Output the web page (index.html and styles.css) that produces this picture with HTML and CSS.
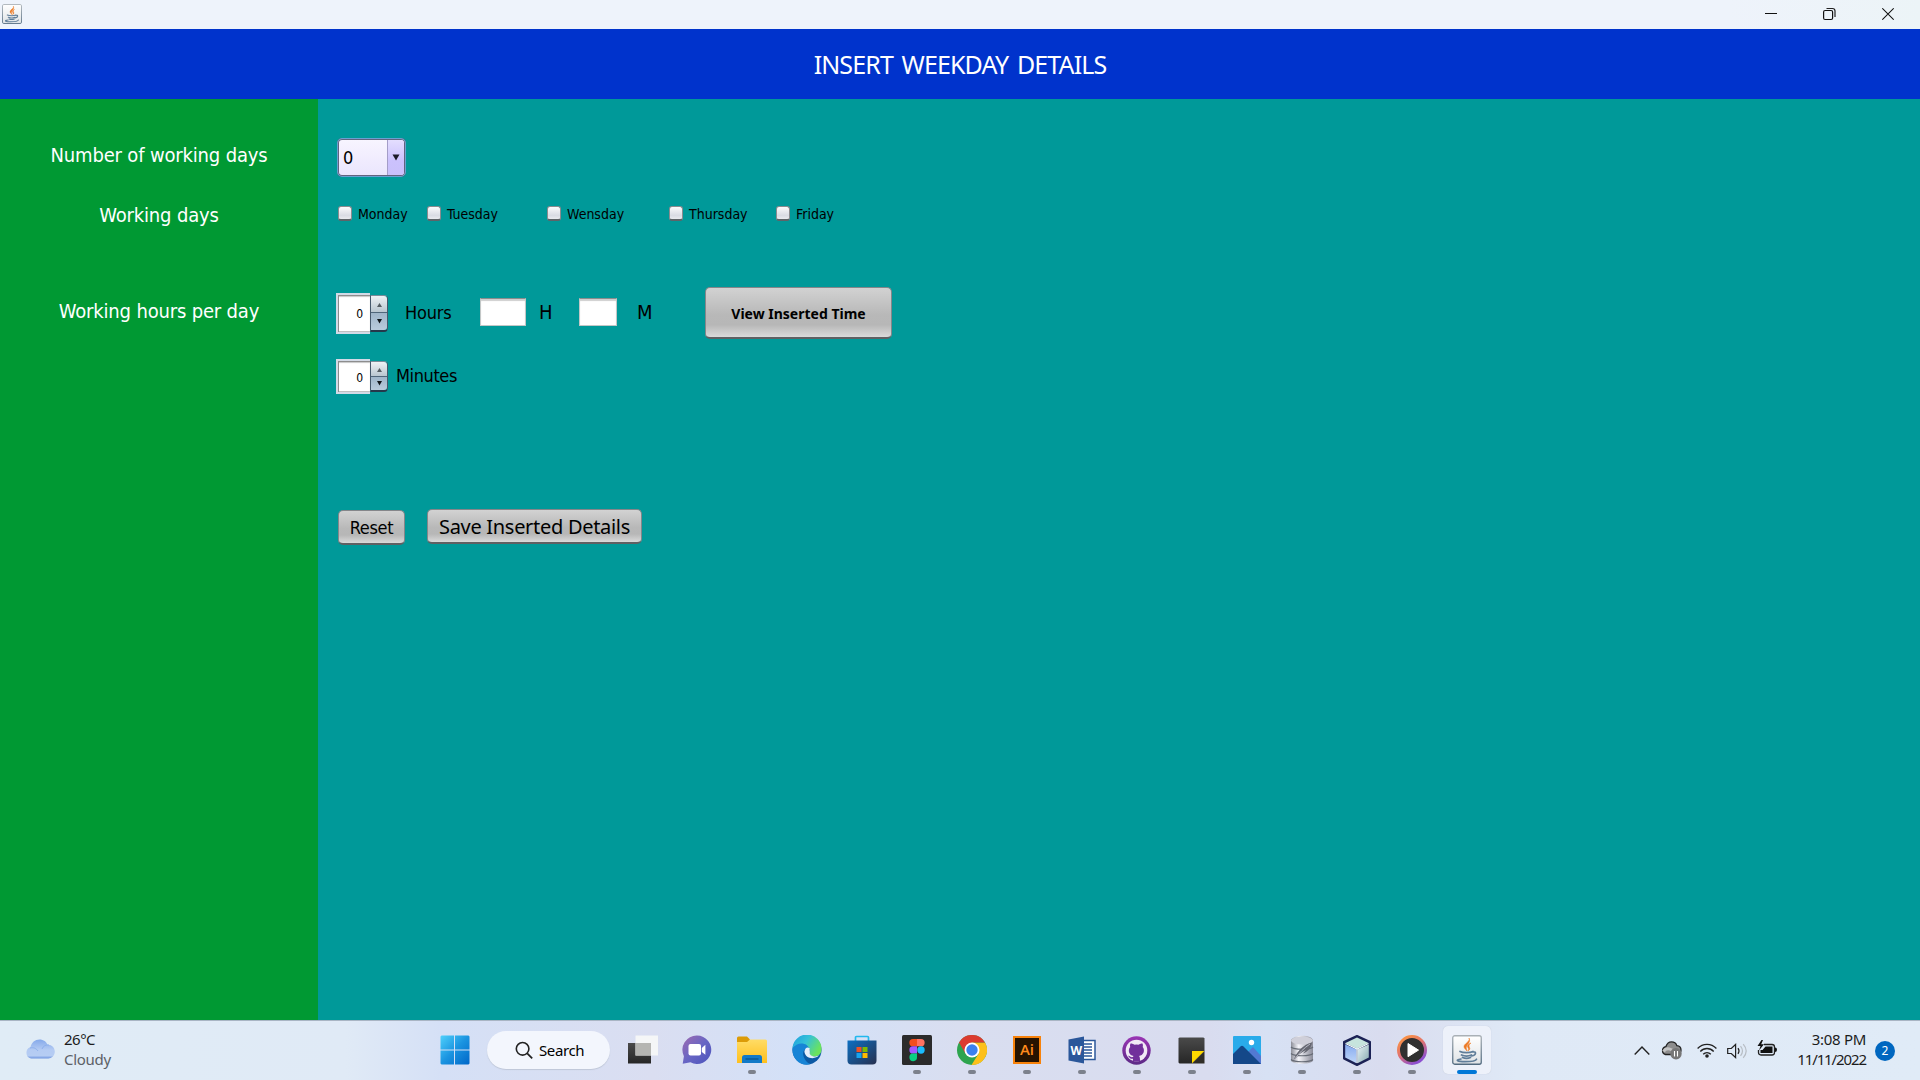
FILE: index.html
```html
<!DOCTYPE html>
<html lang="en">
<head>
<meta charset="utf-8">
<title>Weekday Details</title>
<link rel="stylesheet" href="styles.css">
</head>
<body>
<svg class="defs" width="0" height="0" aria-hidden="true">
  <defs>
    <linearGradient id="tile" x1="0" y1="0" x2="0" y2="1"><stop offset="0" stop-color="#fff"/><stop offset="1" stop-color="#dfe3e6"/></linearGradient>
    <linearGradient id="tileEdge" x1="0" y1="0" x2="0" y2="1"><stop offset="0" stop-color="#a9b0b6"/><stop offset="1" stop-color="#526b80"/></linearGradient>
    <linearGradient id="win" x1="0" y1="0" x2="1" y2="1"><stop offset="0" stop-color="#4fd0fb"/><stop offset=".5" stop-color="#1a93e0"/><stop offset="1" stop-color="#0067c8"/></linearGradient>
    <linearGradient id="cloud" x1="0" y1="0" x2="0" y2="1"><stop offset="0" stop-color="#85a9ea"/><stop offset=".55" stop-color="#b4cbf3"/><stop offset=".85" stop-color="#b6cdf3"/><stop offset="1" stop-color="#6d94df"/></linearGradient>
    <linearGradient id="chat" x1="0" y1="0" x2="1" y2="1"><stop offset="0" stop-color="#a06bb0"/><stop offset=".5" stop-color="#6866c4"/><stop offset="1" stop-color="#4b53bc"/></linearGradient>
    <linearGradient id="folder" x1="0" y1="0" x2="0" y2="1"><stop offset="0" stop-color="#ffdc66"/><stop offset="1" stop-color="#ffbf1c"/></linearGradient>
    <linearGradient id="edgeTop" x1="0" y1="0" x2="1" y2=".5"><stop offset="0" stop-color="#1c9de0"/><stop offset=".5" stop-color="#35c1d8"/><stop offset="1" stop-color="#6be35c"/></linearGradient>
    <linearGradient id="store" x1="0" y1="0" x2="1" y2="1"><stop offset="0" stop-color="#0d6fc2"/><stop offset="1" stop-color="#27304f"/></linearGradient>
    <linearGradient id="dark" x1="0" y1="0" x2="0" y2="1"><stop offset="0" stop-color="#4a4a4a"/><stop offset="1" stop-color="#262626"/></linearGradient>
    <linearGradient id="git" x1="0" y1="0" x2="0" y2="1"><stop offset="0" stop-color="#9a35b4"/><stop offset="1" stop-color="#5c2a86"/></linearGradient>
    <linearGradient id="metal" x1="0" y1="0" x2="1" y2="0"><stop offset="0" stop-color="#8c8e98"/><stop offset=".35" stop-color="#f5f5fa"/><stop offset="1" stop-color="#8a8b98"/></linearGradient>
    <linearGradient id="ring" x1="0" y1="0" x2=".6" y2="1"><stop offset="0" stop-color="#ff9a3c"/><stop offset=".5" stop-color="#e4756a"/><stop offset="1" stop-color="#8d4fd0"/></linearGradient>
    <linearGradient id="cubeL" x1="0" y1="0" x2="0" y2="1"><stop offset="0" stop-color="#86aaf0"/><stop offset="1" stop-color="#bfd6f8"/></linearGradient>
    <linearGradient id="cubeR" x1="0" y1="0" x2="1" y2="1"><stop offset="0" stop-color="#eaf5f6"/><stop offset="1" stop-color="#86a9b0"/></linearGradient>
    <symbol id="java" viewBox="0 0 30 30">
      <rect x=".75" y=".75" width="28.5" height="28.5" rx="2" fill="url(#tile)" stroke="url(#tileEdge)" stroke-width="1.3"/>
      <path d="M17 3c1.500 4-5.500 5.500-5 9 .2 1.500 2 2.500 3 4-.5-2.500-1.200-3-.3-5C15.500 9 19 7 17 3zM19 8c-4 1.500-4 3.500-2.700 5.200.6 1 .2 2-.5 2.800 2.600-1.500 2.200-2.700 1.500-4C16.500 10.500 17.500 9 19 8z" fill="#ec7a25" stroke="#ec7a25" stroke-width=".5"/>
      <path d="M8 16.500c3 1.500 10 1.500 13 0M20.500 17c4-1 4.200 3-.8 4M9.500 20c3 1.300 7 1.300 10 0M10.500 22.500c2.500 1 5.500 1 8 0M9 24c-7 1.200-3 2.500 4 2.600 8 0 11-1 11.500-2.400" fill="none" stroke="#5f7d99" stroke-width="1.700" stroke-linecap="round"/>
    </symbol>
  </defs>
</svg>

<header class="titlebar">
  <svg class="app-icon" width="20" height="20"><use href="#java"/></svg>
  <div class="window-controls">
    <svg width="12" height="14" viewBox="0 0 12 14"><path d="M0 6.500h12" stroke="#111" fill="none"/></svg>
    <svg width="13" height="14" viewBox="0 0 13 14"><path d="M3.500 1.500h6q2.500 0 2.500 2.500v6" stroke="#222" stroke-width="1.200" fill="none"/><rect x=".6" y="3.500" width="9" height="9" rx="1.500" stroke="#111" stroke-width="1.200" fill="none"/></svg>
    <svg width="12" height="14" viewBox="0 0 12 14"><path d="M.3 1.300l11.400 11.400M11.700 1.300L.3 12.700" stroke="#111" stroke-width="1.200" fill="none"/></svg>
  </div>
</header>

<h1 class="banner">INSERT WEEKDAY DETAILS</h1>

<main class="workspace">
  <aside class="sidebar">
    <div class="label label-count">Number of working days</div>
    <div class="label label-days">Working days</div>
    <div class="label label-hours">Working hours per day</div>
  </aside>
  <section class="form">
    <div class="combo">
      <span class="combo-value">0</span>
      <span class="combo-arrow"><svg width="8" height="7" viewBox="0 0 8 7"><path d="M.5.5h7L4 6.500z" fill="#1c1a28"/></svg></span>
    </div>
    <div class="days">
      <div class="day"><span class="box"></span><span>Monday</span></div>
      <div class="day"><span class="box"></span><span>Tuesday</span></div>
      <div class="day"><span class="box"></span><span>Wensday</span></div>
      <div class="day"><span class="box"></span><span>Thursday</span></div>
      <div class="day"><span class="box"></span><span>Friday</span></div>
    </div>
    <div class="row hours">
      <div class="spinner">
        <span class="spin-value">0</span>
        <span class="spin-buttons">
          <span class="spin up"><svg width="5" height="7" viewBox="0 0 5 7"><path d="M0 7h5L2.500 3z" fill="#555d63"/></svg></span>
          <span class="spin down"><svg width="5" height="5" viewBox="0 0 5 5"><path d="M0 0h5L2.500 4.500z" fill="#101418"/></svg></span>
        </span>
      </div>
      <span class="unit unit-hours">Hours</span>
      <span class="field field-h"></span>
      <span class="unit unit-h">H</span>
      <span class="field field-m"></span>
      <span class="unit unit-m">M</span>
      <div class="button view">View Inserted Time</div>
    </div>
    <div class="row minutes">
      <div class="spinner short">
        <span class="spin-value">0</span>
        <span class="spin-buttons">
          <span class="spin up"><svg width="5" height="7" viewBox="0 0 5 7"><path d="M0 7h5L2.500 3z" fill="#555d63"/></svg></span>
          <span class="spin down"><svg width="5" height="5" viewBox="0 0 5 5"><path d="M0 0h5L2.500 4.500z" fill="#101418"/></svg></span>
        </span>
      </div>
      <span class="unit unit-minutes">Minutes</span>
    </div>
    <div class="row actions">
      <div class="button reset">Reset</div>
      <div class="button save">Save Inserted Details</div>
    </div>
  </section>
</main>

<footer class="taskbar">
  <div class="weather">
    <svg width="30" height="20" viewBox="0 0 30 20"><path d="M6 19.500a6 6 0 0 1-.5-11.500C6.500 3.500 10 .5 14.500.5c4 0 7 2.300 8 5.200 4.200-.3 7.300 3 7.300 6.800 0 4-3 7-6.500 7z" fill="url(#cloud)"/><path d="M5 9c4-1 6 .5 8 3M17 10c1-3 4-4.500 7-4" stroke="#8eb0ec" fill="none"/></svg>
    <div class="weather-text"><span class="temp">26°C</span><span class="sky">Cloudy</span></div>
  </div>
  <div class="apps">
    <div class="app start"><svg width="30" height="30" viewBox="0 0 30 30"><path d="M1.500.5H14v14H.5v-13zM15 .5h13.500l1 1v13H15zM.5 15.500H14v14H1.500l-1-1zM15 15.500h14.500v13l-1 1H15z" fill="url(#win)"/></svg></div>
    <div class="search"><svg width="19" height="19" viewBox="0 0 19 19"><circle cx="7.600" cy="7.800" r="6.300" fill="none" stroke="#222" stroke-width="1.600"/><path d="M12.200 12.300l5 5" stroke="#222" stroke-width="1.800"/></svg><span>Search</span></div>
    <div class="app"><svg width="30" height="30" viewBox="0 0 30 30"><path d="M0 8h23v20.500H0z" fill="url(#dark)"/><path d="M7.500.5H30v20H7.500z" fill="#f7f7f7" opacity=".95"/><path d="M7.500 8H23v12.500H7.500z" fill="#b5b5b2"/></svg></div>
    <div class="app"><svg width="30" height="30" viewBox="0 0 30 30"><path d="M15 .5A14.200 14.200 0 1 1 8.500 27.300L.7 28.700l1.200-7.500A14.300 14.300 0 0 1 15 .5z" fill="url(#chat)"/><rect x="6.500" y="9" width="12.500" height="11.500" rx="2" fill="#fff"/><path d="M19.800 13l3.600-3.200v10L19.800 17z" fill="#fff"/></svg></div>
    <div class="app running"><svg width="30" height="30" viewBox="0 0 30 30"><path d="M0 3q0-1.500 1.500-1.500h8.500l3 3V9H0z" fill="#dc9b07"/><path d="M0 7h10l3-2.500h15.500q1.500 0 1.500 1.500v22H0z" fill="url(#folder)"/><path d="M5 28v-5.500q0-2.500 2.500-2.500h15q2.500 0 2.500 2.500V28z" fill="#1279c7"/><path d="M8.500 24h13" stroke="#07528f" stroke-width="1.300"/></svg></div>
    <div class="app"><svg width="30" height="30" viewBox="0 0 31 31"><circle cx="15.500" cy="15.500" r="15" fill="#0c59a4"/><path d="M.5 14A15 15 0 0 1 30.500 15c0 5-4 7.500-8.500 7.200-3-.3-4.500-2-3.600-3.500C20.500 13.500 11 4 .5 14z" fill="url(#edgeTop)"/><path d="M.5 14C5 6.500 16.500 7 18 15c-4-2-7 1-6.500 5 .6 5 4.500 9.500 7.800 10C9 33.500-.5 24 .5 14z" fill="#1784d6"/><path d="M12.800 17c.5-3.500 3.500-5.500 5.600-3-.6 1.500.4 2 0 4.500-.7 2.500 5.200 5.200 9.600 2.500-1.500 1.800-4 2.900-6.800 2.900-4.500 0-8-2.500-8.400-6.900z" fill="#e6eefb"/></svg></div>
    <div class="app"><svg width="30" height="30" viewBox="0 0 30 30"><path d="M8.500 6V2.500q0-1 1-1h11q1 0 1 1V6" stroke="#22b8ee" stroke-width="1.700" fill="none"/><path d="M.5 5.500h29v20q0 4-4 4h-21q-4 0-4-4z" fill="url(#store)"/><path d="M9.500 12h5v5h-5z" fill="#f25022"/><path d="M15.500 12h5v5h-5z" fill="#7fba00"/><path d="M9.500 18h5v5h-5z" fill="#18a4ee"/><path d="M15.500 18h5v5h-5z" fill="#ffb900"/></svg></div>
    <div class="app running"><svg width="30" height="30" viewBox="0 0 30 30"><rect width="30" height="30" rx="1.500" fill="#2b2b2b"/><path d="M15 4h-4a3.600 3.600 0 0 0 0 7.300h4z" fill="#f24e1e"/><path d="M15 4h4a3.600 3.600 0 0 1 0 7.300h-4z" fill="#ff7262"/><path d="M15 11.300h-4a3.600 3.600 0 0 0 0 7.300h4z" fill="#a259ff"/><circle cx="19" cy="15" r="3.700" fill="#1abcfe"/><path d="M15 18.600h-4a3.800 3.800 0 1 0 4 3.700z" fill="#0acf83"/></svg></div>
    <div class="app running"><svg width="30" height="30" viewBox="0 0 30 30"><circle cx="15" cy="15" r="15" fill="#2da44e"/><path d="M15 7.500h13A15 15 0 0 1 14.500 30l7-11.200z" fill="#fdc01a"/><path d="M2 7.500a15 15 0 0 1 26 0H15L8.500 18.700z" fill="#db3b2f"/><circle cx="15" cy="15" r="7.500" fill="#fff"/><circle cx="15" cy="15" r="5.700" fill="#3a80ee"/></svg></div>
    <div class="app running"><svg width="28" height="28" viewBox="0 0 28 28"><rect x="1" y="1" width="26" height="26" fill="#261300" stroke="#f7820b" stroke-width="2"/><text class="ai" x="14" y="18.500">Ai</text></svg></div>
    <div class="app running"><svg width="28" height="28" viewBox="0 0 28 28"><path d="M13 4.500h14v19H13z" fill="#fff" stroke="#2b579a" stroke-width="1.500"/><path d="M15 8h9M15 11h9M15 14h9M15 17h9M15 20h9" stroke="#2b579a" stroke-width="1.500"/><path d="M.5 3.500l15.500-3v27l-15.500-3z" fill="#2b579a"/><text class="word" x="8.200" y="18.500">W</text></svg></div>
    <div class="app running"><svg width="29" height="29" viewBox="0 0 29 29"><circle cx="14.500" cy="14.500" r="14.200" fill="url(#git)"/><circle cx="14.500" cy="14.500" r="10.800" fill="#f1eaf5"/><path d="M8.500 7.500c1-.4 2.800.4 4 1.200q2-.5 4 0c1.200-.8 3-1.600 4-1.200.6 1.400.5 2.600.2 3.500 2.800 3.500.6 8.500-3.700 9 .9.900 1 2 1 5.200h-7v-2.500c-3.500.8-3.500-2.300-5-2.800 2-.5 2.400 2 5 1.200 0-.5.200-.8.600-1.200-4.300-.5-6.300-5.500-3.400-9-.3-1-.3-2.200.3-3.400z" fill="#71309b"/></svg></div>
    <div class="app running"><svg width="27" height="27" viewBox="0 0 27 27"><path d="M1.500.5h24l1 1V14L14 26.500H1.500l-1-1v-24z" fill="url(#dark)"/><path d="M14 14h12.500L14 26.500z" fill="#ffda00"/><path d="M26.500 14v12.500H14z" fill="#302d27"/></svg></div>
    <div class="app running"><svg width="28" height="28" viewBox="0 0 28 28"><rect width="28" height="28" rx="1" fill="#29abea"/><path d="M12 19l8-8 8 9v8H13z" fill="#5279d2"/><path d="M0 18l7.500-7.500q1.500-1.300 3 0L28 28H0z" fill="#144889"/><circle cx="18.500" cy="6.500" r="2.700" fill="#fff"/></svg></div>
    <div class="app running"><svg width="24" height="30" viewBox="0 0 24 30"><path d="M1 5v20c0 5 22 5 22 0V5c-3-6-19-5-22 0z" fill="url(#metal)"/><ellipse cx="12" cy="5.500" rx="11" ry="4" fill="#cfcfd9"/><path d="M1 12c3 3 19 3 22 0M1 18.500c3 3 19 3 22 0M1 24.500c3 3 19 3 22 0" stroke="#666b75" stroke-width="1.200" fill="none"/><path d="M3 27C6 17 13 9.500 22 7.500c-.5 5-4 9-9 11l3-3.500c-5 2-9 6-13 12z" fill="#656771"/><path d="M4 25C9 18 14 13 20 9" stroke="#b9bac5" fill="none"/></svg></div>
    <div class="app running"><svg width="30" height="31" viewBox="0 0 30 31"><path d="M15 1l13 6v16.500l-13 6.500-13-6.500V7z" fill="#1c2255" stroke="#1c2255" stroke-width="2" stroke-linejoin="round"/><path d="M15 2.500L26.500 8 15 13.500 3.500 8z" fill="#c7e4dd"/><path d="M3.200 9.500l11.300 5v13.700L3.200 22.500z" fill="url(#cubeL)"/><path d="M26.800 9.500l-11.300 5v13.700l11.300-5.700z" fill="url(#cubeR)"/><path d="M3.500 8.500L15 14l11.500-5.500M15 14v14" stroke="#f5feff" stroke-width="1.200" fill="none"/></svg></div>
    <div class="app running"><svg width="30" height="30" viewBox="0 0 30 30"><circle cx="15" cy="15" r="13.500" fill="#303030" stroke="url(#ring)" stroke-width="3"/><path d="M11 8.500v13.200l10.500-6.600z" fill="#fff" stroke="#fff" stroke-linejoin="round"/></svg></div>
    <div class="app current"><svg width="30" height="30"><use href="#java"/></svg></div>
  </div>
  <div class="tray">
    <svg class="chevron" width="16" height="9" viewBox="0 0 16 9"><path d="M.7 8.500L8 1l7.300 7.500" fill="none" stroke="#222" stroke-width="1.400"/></svg>
    <svg class="sync" width="21" height="19" viewBox="0 0 21 19"><path d="M4.500 13.500a4 4 0 0 1 .3-7.800C6 2.500 8 .9 10.500.9c2.600 0 4.600 1.500 5.300 3.700 2.700.2 4.200 2.200 4.200 4.500 0 2.500-1.500 4.400-4 4.400z" fill="#8d8d8d" stroke="#222" stroke-width="1.300"/><path d="M2.500 10.500c2-3 5-3.500 8.500-1.500" stroke="#c3c3c3" stroke-width="3" fill="none"/><circle cx="15" cy="12.800" r="5.700" fill="#777"/><path d="M13.500 10v5.600M16.500 10v5.600" stroke="#fff" stroke-width="1.100"/></svg>
    <svg class="wifi" width="20" height="15" viewBox="0 0 20 15"><path d="M.6 5.500c5.200-5.600 13.600-5.600 18.800 0M3.300 8.500c3.700-4 9.700-4 13.400 0M6.200 11.300c2.200-2.300 5.400-2.300 7.600 0" fill="none" stroke="#222" stroke-width="1.300"/><circle cx="10" cy="13" r="1.800" fill="#222"/></svg>
    <svg class="volume" width="21" height="16" viewBox="0 0 21 16"><path d="M.7 5.500h3.600L8.600 1.500v13l-4.300-4H.7z" fill="none" stroke="#222" stroke-width="1.200"/><path d="M11 5.200q2 2.800 0 5.600" fill="none" stroke="#222" stroke-width="1.200"/><path d="M13.500 3.200q4 4.800 0 9.600M16.200 1.200q6 6.800 0 13.600" fill="none" stroke="#b7bdc4" stroke-width="1.200"/></svg>
    <svg class="battery" width="20" height="17" viewBox="0 0 20 17"><path d="M7 4.500h8q2.500 0 2.500 2.500v5.500q0 2.500-2.500 2.500H4q-2.500 0-2.500-2.500V10" fill="none" stroke="#222" stroke-width="1.300"/><path d="M8.500 6.500h7v6.500h-12V10h2z" fill="#111"/><path d="M18 7.500q2 0 2 2.200T18 12zM4.500 0L.5 6h3L2 10.500 7 4.300H4.200L6 0z" fill="#111"/></svg>
    <div class="clock"><span class="time">3:08 PM</span><span class="date">11/11/2022</span></div>
    <span class="badge">2</span>
  </div>
</footer>
</body>
</html>
```
FILE: styles.css
```css
* { box-sizing: border-box; }

body {
  margin: 0;
  width: 1920px;
  height: 1080px;
  overflow: hidden;
  display: flex;
  flex-direction: column;
  font-family: "DejaVu Sans Condensed", "DejaVu Sans", sans-serif;
  font-stretch: condensed;
  color: #000;
}

svg { display: block; flex: none; }
.defs { position: absolute; }

/* Window frame */
.titlebar {
  height: 29px;
  flex: none;
  display: flex;
  align-items: flex-start;
  justify-content: space-between;
  padding: 4px 26px 0 2px;
  background: linear-gradient(90deg, #eef3fb 0 90%, #ecf4f7);
}
.window-controls { display: flex; gap: 46px; padding-top: 3px; }

.banner {
  margin: 0;
  height: 70px;
  flex: none;
  background: #0033cc;
  color: #fff;
  font-family: "Noto Sans", sans-serif;
  font-size: 25px;
  font-weight: 400;
  line-height: 71px;
  letter-spacing: -0.88px;
  word-spacing: 3px;
  text-align: center;
}

.workspace {
  height: 921px;
  flex: none;
  display: grid;
  grid-template-columns: 318px 1fr;
}

.sidebar { background: #009933; padding-top: 42px; }
.label {
  color: #fff;
  font-size: 20px;
  line-height: 28px;
  letter-spacing: -0.17px;
  text-align: center;
}
.label-days { margin-top: 32px; }
.label-hours { margin-top: 68px; }

.form { background: #009999; padding: 39px 0 0 18px; }

/* Combo box */
.combo {
  width: 69px;
  height: 39px;
  margin-left: 1px;
  display: flex;
  border: 1px solid #5b5b78;
  border-bottom-color: #3c3c55;
  border-radius: 5px;
  outline: 1px solid #6b9fd0;
  outline-offset: -1px;
  box-shadow: inset 0 0 0 1px #63637e;
  background: linear-gradient(#f8f5ff, #eae5fd);
  overflow: hidden;
}
.combo-value { flex: 1; padding-left: 5px; font-size: 18px; line-height: 37px; }
.combo-arrow {
  width: 17px;
  margin: 1px 1px 1px 0;
  display: flex;
  align-items: center;
  justify-content: center;
  padding-bottom: 1px;
  border-left: 1px solid #a49dc8;
  border-radius: 0 3px 3px 0;
  background: linear-gradient(#e4defe, #cbc1fd 60%, #c9c0fb);
}

/* Weekday checkboxes */
.days {
  display: grid;
  grid-template-columns: 89px 120px 122px 107px auto;
  margin: 27px 0 0 2px;
  height: 20px;
  font-size: 14px;
  line-height: 20px;
}
.day { display: flex; gap: 6px; }
.box {
  width: 14px;
  height: 15px;
  margin-top: 2px;
  border: 1px solid #8b8b8f;
  border-bottom: 2px solid #5f6468;
  border-radius: 3px;
  background: linear-gradient(#fbfbfc, #dadce4 70%, #e9eaee);
}

.row { display: flex; align-items: center; }
.hours { height: 52px; margin-top: 63px; }
.minutes { height: 35px; margin-top: 20px; }
.actions { height: 36px; margin-top: 115px; align-items: flex-start; }

/* Spinners */
.spinner { width: 52px; height: 41px; display: flex; align-items: center; }
.spin-value {
  width: 34px;
  height: 41px;
  padding-right: 7px;
  text-align: right;
  font-size: 12px;
  line-height: 39px;
  background: #fff;
  border: 2px solid #d3dae6;
  border-right: 0;
  box-shadow: inset 1px 1px 0 #8d8d8d, inset 0 2px 1px #c8c8c8, inset 0 -1px 0 #c0c0c0;
}
.spin-buttons {
  width: 18px;
  height: 37px;
  display: flex;
  flex-direction: column;
  border: 1px solid #46586b;
  border-top-color: #7b8b99;
  border-bottom: 2px solid #24384b;
  border-radius: 0 4px 4px 0;
}
.spin { flex: 1 1 0; display: flex; align-items: center; justify-content: center; }
.up { background: linear-gradient(#eef2f5, #b9c6d0); border-bottom: 1px solid #50667a; border-radius: 0 3px 0 0; }
.down { background: linear-gradient(#9fb5c9, #b9cbdc); border-radius: 0 0 3px 0; }
.short, .short .spin-value { height: 35px; }
.short .spin-value { line-height: 34px; }
.short .spin-buttons { height: 31px; }

.unit { font-size: 18px; margin-top: -2px; }
.unit-hours { width: 75px; margin-left: 17px; letter-spacing: -0.2px; }
.unit-h, .unit-m { font-size: 20px; }
.unit-h { width: 40px; margin-left: 13px; }
.unit-m { width: 68px; margin-left: 20px; }
.unit-minutes { margin-left: 8px; letter-spacing: -0.4px; }
.field {
  height: 28px;
  margin-top: -2px;
  background: #fff;
  border: 1px solid #c3c7c7;
  border-top-color: #8a8d8d;
  box-shadow: inset 0 2px 1px #cfcfcf;
}
.field-h { width: 46px; }
.field-m { width: 38px; }

/* Push buttons */
.button {
  display: flex;
  align-items: center;
  justify-content: center;
  border: 1px solid #85868a;
  border-bottom: 2px solid #5f6063;
  border-radius: 5px;
  background: linear-gradient(#d2d2d2, #b8b8b8 55%, #b7b7b7 75%, #dadada);
  white-space: nowrap;
}
.view {
  width: 187px;
  height: 52px;
  padding-top: 2px;
  font: 700 14px "Noto Sans", sans-serif;
}
.reset { width: 67px; height: 35px; margin: 1px 22px 0 2px; font-size: 18px; letter-spacing: -0.3px; }
.save { width: 215px; height: 35px; font: 20px "Noto Sans", sans-serif; letter-spacing: -0.3px; }

/* Taskbar */
.taskbar {
  height: 60px;
  flex: none;
  display: grid;
  grid-template-columns: 427px 1fr auto;
  border-top: 1px solid #a9b5c4;
  background: linear-gradient(90deg, #e0ecf6 0, #e0eaf6 18%, #d5e0f6 23%, #dadef1 34%, #d3e1f8 42%, #d9def0 50%, #d9dcef 63%, #d7e1f4 66%, #d9dcef 72%, #dfe9f6 79%, #e0ebf7 100%);
  font-family: "Noto Sans", sans-serif;
  font-size: 15px;
  line-height: 20px;
}
.weather { display: flex; padding: 18px 0 0 25px; gap: 9px; color: #1c1c1c; }
.weather-text { display: flex; flex-direction: column; margin-top: -10px; }
.temp { letter-spacing: -0.5px; }
.sky { letter-spacing: -0.3px; color: #5c6167; }

.apps { display: flex; height: 59px; }
.app {
  width: 55px;
  display: flex;
  align-items: center;
  justify-content: center;
  position: relative;
  padding-bottom: 1px;
}
.search {
  width: 123px;
  height: 38px;
  margin: 10px 5px 0;
  display: flex;
  align-items: center;
  gap: 5px;
  padding-left: 28px;
  border-radius: 19px;
  background: #f3f6fd;
  box-shadow: 0 1px 1px #bfc7d8;
  letter-spacing: -0.4px;
}
.search + .app { margin-left: -1px; padding-left: 2px; }
.running::after, .current::after {
  content: "";
  position: absolute;
  top: 49px;
  left: 24px;
  width: 8px;
  height: 4px;
  border-radius: 2px;
  background: #7c818c;
}
.current::before {
  content: "";
  position: absolute;
  left: 4px;
  top: 5px;
  width: 48px;
  height: 48px;
  border-radius: 5px;
  background: #edf1fa;
  box-shadow: 0 0 1px #b9c1d0;
}
.current::after { left: 18px; width: 20px; background: #0078d7; }
.current svg { position: relative; }
.ai { font: 600 15px "Open Sans", sans-serif; fill: #ff8a1c; text-anchor: middle; }
.word { font: 700 12px "Open Sans", sans-serif; fill: #fff; text-anchor: middle; }

.tray { display: flex; align-items: center; padding-right: 25px; color: #1c1c1c; }
.sync { margin-left: 11px; }
.wifi { margin-left: 15px; }
.volume { margin-left: 10px; }
.battery { margin-left: 9px; margin-top: -4px; }
.clock { width: 89px; margin-top: -3px; display: flex; flex-direction: column; align-items: flex-end; }
.time { letter-spacing: -0.3px; }
.date { letter-spacing: -1.1px; }
.badge {
  width: 20px;
  height: 20px;
  margin-left: 9px;
  border-radius: 50%;
  background: #0067c0;
  color: #fff;
  font-size: 12px;
  text-align: center;
}
```
